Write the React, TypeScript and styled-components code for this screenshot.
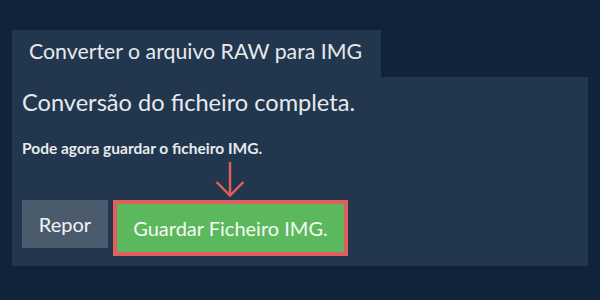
import React from "react";
import styled, { createGlobalStyle } from "styled-components";

const Global = createGlobalStyle`
  html, body { margin: 0; padding: 0; background: #11233a; }
  body { font-family: Lato, "Open Sans", sans-serif; width: 600px; height: 300px; overflow: hidden; }
`;

const Page = styled.div`
  padding: 30px 12px 0 12px;
  display: flex;
  flex-direction: column;
`;

const Tab = styled.div`
  align-self: flex-start;
  background: #22374d;
  color: #e6eaee;
  font-size: 21.3px;
  height: 47px;
  line-height: 42px;
  padding: 0 18px 0 17px;
  width: 334px;
`;

const Panel = styled.div`
  background: #22374d;
  height: 189px;
  padding: 10px 10px 0 10px;
  box-sizing: border-box;
  display: flex;
  flex-direction: column;
`;

const Heading = styled.div`
  color: #e6eaee;
  font-size: 23.6px;
  line-height: 30px;
`;

const Note = styled.div`
  color: #e6eaee;
  font-size: 15.5px;
  font-weight: bold;
  margin-top: 22px;
  line-height: 18px;
`;

const Actions = styled.div`
  display: flex;
  align-items: flex-start;
  gap: 5px;
  margin-top: 5px;
`;

const ResetButton = styled.button`
  background: #4b5b6e;
  color: #f2f4f6;
  border: none;
  font-family: inherit;
  font-size: 20px;
  width: 86px;
  height: 48px;
  margin-top: 38px;
  padding: 0;
`;

const Highlight = styled.div`
  display: flex;
  flex-direction: column;
  align-items: center;
`;

const Arrow = styled.svg`
  display: block;
  margin-right: 2px;
  margin-bottom: 2px;
`;

const SaveFrame = styled.div`
  border: 4px solid #df5e5e;
  padding: 0;
`;

const SaveButton = styled.button`
  background: #5cb85c;
  color: #f5fbf5;
  border: none;
  font-family: inherit;
  font-size: 20px;
  width: 227px;
  height: 48px;
  padding: 0;
  display: block;
`;

export default function App() {
  return (
    <>
      <Global />
      <Page>
        <Tab>Converter o arquivo RAW para IMG</Tab>
        <Panel>
          <Heading>Conversão do ficheiro completa.</Heading>
          <Note>Pode agora guardar o ficheiro IMG.</Note>
          <Actions>
            <ResetButton>Repor</ResetButton>
            <Highlight>
              <Arrow width="30" height="36" viewBox="0 0 30 36">
                <line x1="15" y1="0" x2="15" y2="34" stroke="#df5e5e" strokeWidth="2.4" />
                <polyline points="1.5,20 15,33.5 28.5,20" fill="none" stroke="#df5e5e" strokeWidth="2.4" />
              </Arrow>
              <SaveFrame>
                <SaveButton>Guardar Ficheiro IMG.</SaveButton>
              </SaveFrame>
            </Highlight>
          </Actions>
        </Panel>
      </Page>
    </>
  );
}
